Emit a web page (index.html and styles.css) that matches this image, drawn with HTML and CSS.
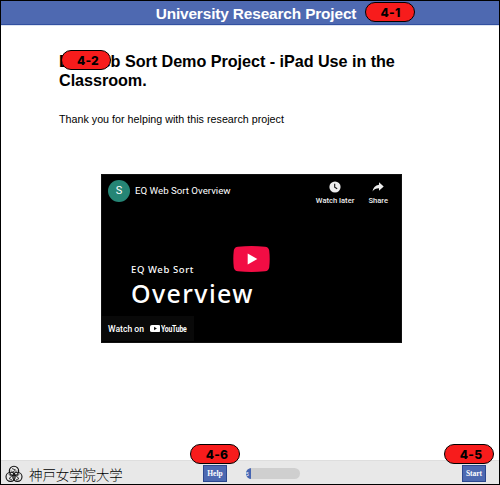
FILE: index.html
```html
<!DOCTYPE html>
<html lang="en">
<head>
<meta charset="utf-8">
<title>University Research Project</title>
<link rel="stylesheet" href="styles.css">
</head>
<body>
<div class="page">
  <header class="header"><h1 class="header-title">University Research Project</h1><span class="badge badge-header">4-1</span></header>
  <main class="main">
    <h2 class="title">EQ Web Sort Demo Project - iPad Use in the Classroom.<span class="badge badge-title">4-2</span></h2>
    <p class="intro">Thank you for helping with this research project</p>
    <section class="video">
      <div class="video-top">
        <span class="avatar">S</span>
        <span class="video-name">EQ Web Sort Overview</span>
        <div class="action later">
          <svg width="12" height="12" viewBox="0 0 12 12"><circle cx="6" cy="6" r="5.6" fill="#eee"/><path d="M5.7 2.8v3.5l2.5 1.5" fill="none" stroke="#111" stroke-width="1.1"/></svg>
          <span>Watch later</span>
        </div>
        <div class="action share">
          <svg width="12" height="12" viewBox="0 0 12 12"><path d="M7 1.2 11.7 5.5 7 9.8V7.3C4 7.3 2 8.2.5 10.6 1 7 3.2 4.4 7 3.8Z" fill="#eee"/></svg>
          <span>Share</span>
        </div>
      </div>
      <div class="slide">
        <span class="slide-small">EQ Web Sort</span>
        <span class="slide-large">Overview</span>
      </div>
      <div class="watch">
        <span>Watch on</span>
        <svg class="yt-mark" width="12" height="9" viewBox="0 0 12 9"><rect y=".3" width="12" height="8.4" rx="2.2" fill="#fff"/><path d="M4.7 2.6v3.8L8 4.5Z" fill="#0b0b0b"/></svg>
        <span class="yt-name">YouTube</span>
      </div>
      <svg class="play" width="37" height="26" viewBox="0 0 37 26"><path d="M5 .7Q18.500-.5 32 .7 35.500 1 36.200 4.500 37.200 13 36.200 21.500 35.500 25 32 25.300 18.500 26.500 5 25.300 1.500 25 .8 21.500-.2 13 .8 4.500 1.500 1 5 .7Z" fill="#f20d44"/><path d="M14.700 7.500v11L24.300 13Z" fill="#fff"/></svg>
    </section>
  </main>
  <footer class="footer">
    <svg class="crest" width="18" height="18" viewBox="0 0 18 18" fill="none" stroke="#111"><g stroke-width="1.100"><circle cx="9" cy="6" r="4.700"/><circle cx="5.600" cy="11.800" r="4.600"/><circle cx="12.400" cy="11.800" r="4.600"/></g><path d="M7 3.500 10.500 5 7.500 7.500l3 2M3.500 9l3 2.500-2.500 2 3 1.500M14.500 9l-3 2.500 2.500 2-3 1.500M9 8v7M6 5.500l5 5M12 5.500l-5 5" stroke-width=".8"/></svg>
    <span class="school" lang="ja">神戸女学院大学</span>
    <div class="button help">Help<span class="badge badge-help">4-6</span></div>
    <div class="progress"><span class="progress-fill">5</span></div>
    <div class="button start">Start<span class="badge badge-start">4-5</span></div>
  </footer>
</div>
</body>
</html>
```

FILE: styles.css
```css
* { box-sizing: border-box; }
body { margin: 0; background: #fff; font-family: "Liberation Sans", sans-serif; color: #000; }
.page { display: flex; flex-direction: column; width: 500px; height: 485px; border: 1px solid #000; overflow: hidden; }
.header { position: relative; flex: none; height: 24px; background: #4e69b1; border-bottom: 1px solid #3250a0; box-shadow: 0 1px #dde4f1; text-align: center; }
.header-title { margin: 0 0 0 12px; font-size: 15.4px; letter-spacing: -.14px; line-height: 25px; color: #fff; width: 486px; }
.badge { position: absolute; width: 50px; height: 20px; border: 1px solid #000; border-radius: 10px; background: #f71c1c; color: #000; font: 800 12px/19px Inter, sans-serif; letter-spacing: .2px; text-align: center; padding-left: 4px; z-index: 1; }
.badge-header { left: 364px; top: 1px; padding-left: 1px; }
.badge-title { left: 2px; top: 0; }
.badge-help { left: -14px; top: -22px; }
.badge-start { left: -19px; top: -22px; }
.main { flex: 1; padding: 25px 57px 0 58px; }
.title { position: relative; margin: 0; width: 345px; font-size: 16.2px; letter-spacing: -.05px; line-height: 19px; padding-top: 2px; }
.intro { margin: 22px 0 0; font-size: 10.7px; line-height: 14px; letter-spacing: .02px; }
.video { position: relative; width: 301px; height: 169px; margin: 48px 0 0 42px; background: #000; color: #fff; font-family: Roboto, sans-serif; display: flex; flex-direction: column; border: 1px solid #111; }
.video-top { display: flex; height: 86px; padding: 5px 13px 0 6px; }
.avatar { width: 22px; height: 22px; border-radius: 50%; background: #258575; font-size: 11px; line-height: 22px; text-align: center; }
.video-name { margin-left: 5px; font-size: 9.7px; line-height: 22px; white-space: nowrap; flex: 1; }
.action { display: flex; flex-direction: column; align-items: center; font-size: 7.6px; font-weight: 500; line-height: 9px; gap: 3px; color: #eee; padding-top: 1px; white-space: nowrap; }
.share { margin-left: 14px; }
.slide { display: flex; flex-direction: column; padding-left: 29px; font-family: "Noto Sans", sans-serif; height: 54px; }
.slide-small { font-size: 9.5px; line-height: 18px; letter-spacing: .6px; font-weight: 500; }
.slide-large { font-size: 25px; line-height: 29px; letter-spacing: 1.4px; font-weight: 500; }
.watch { display: flex; align-items: center; width: 92px; height: 25px; margin-top: 1px; padding-left: 6px; background: #090909; font-size: 8.6px; font-weight: 500; white-space: nowrap; }
.yt-mark { margin-left: 6px; }
.yt-name { display: inline-block; margin-left: 1px; font-size: 8.8px; font-weight: 700; letter-spacing: -.3px; transform: scaleX(.78); transform-origin: left; }
.play { position: absolute; left: 131px; top: 71px; }
.footer { position: relative; flex: none; display: flex; align-items: flex-start; height: 24px; background: #e8e8e8; border-top: 1px solid #dedede; }
.crest { margin: 4px 0 0 4px; }
.school { width: 94px; margin-left: 6px; font: 300 13.4px/26px "Noto Sans CJK JP", sans-serif; white-space: nowrap; }
.button { position: relative; width: 24px; height: 17px; margin-top: 4px; background: #4d69b1; border: 1px solid #2c478e; color: #fff; font: bold 7.5px/15px "Liberation Serif", serif; text-align: center; }
.help { margin-left: 80px; }
.progress { width: 54px; height: 11px; margin: 7px 0 0 19px; border-radius: 5.5px; background: #cfcfcf; overflow: hidden; }
.progress-fill { display: block; width: 5px; height: 11px; background: #4665b2; color: #fff; font-size: 5px; line-height: 12px; }
.start { margin-left: 162px; }
```
